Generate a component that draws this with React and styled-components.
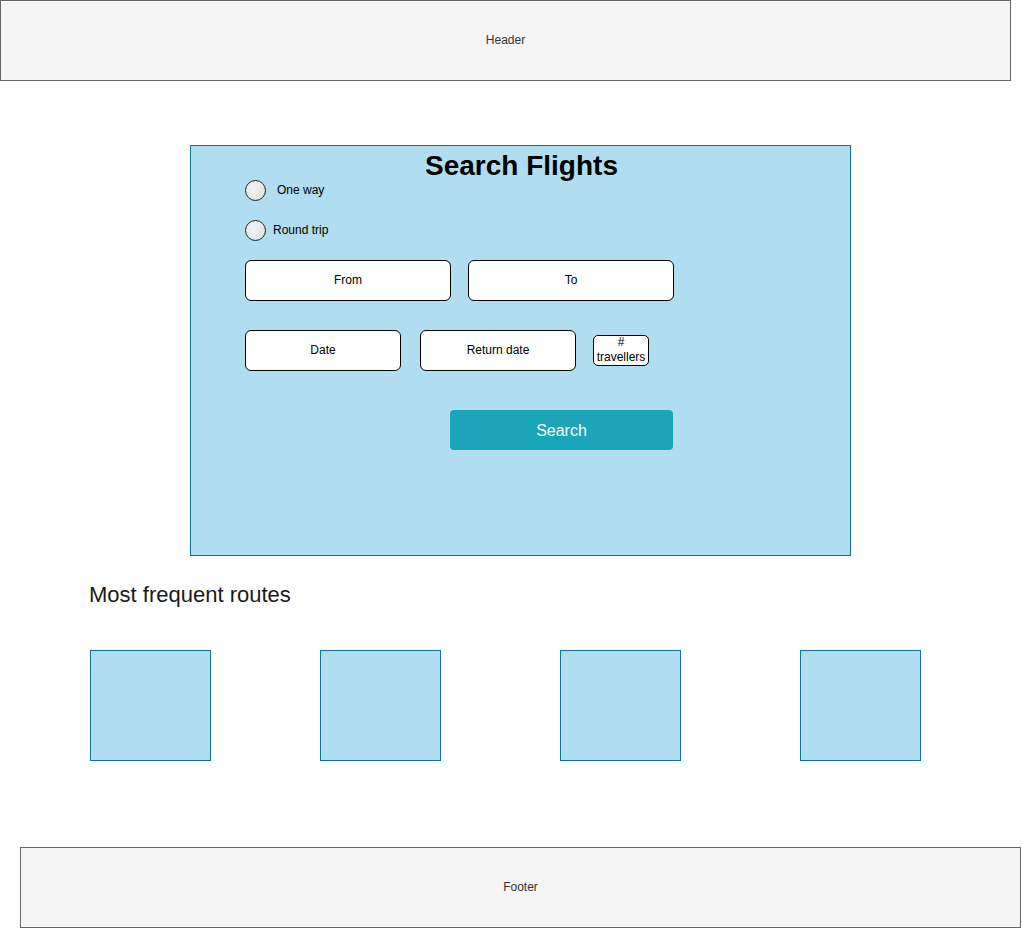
import React from "react";
import styled, { createGlobalStyle } from "styled-components";

const Global = createGlobalStyle`
  *, *::before, *::after { box-sizing: border-box; }
  html, body { margin: 0; padding: 0; background: #ffffff; }
  body { font-family: "Liberation Sans", Arial, sans-serif; color: #000; }
`;

const Page = styled.div`
  width: 1022px;
  min-height: 928px;
  display: flex;
  flex-direction: column;
`;

const Bar = styled.div`
  width: ${(p) => p.$width}px;
  height: 81px;
  margin-left: ${(p) => p.$left || 0}px;
  margin-top: ${(p) => p.$top || 0}px;
  background: #f5f5f5;
  border: 1px solid #666666;
  display: flex;
  align-items: center;
  justify-content: center;
  padding-bottom: 2px;
  font-size: 12px;
  color: #333333;
`;

const Panel = styled.section`
  margin: 64px 0 0 190px;
  width: 661px;
  height: 411px;
  background: #b1ddf0;
  border: 1px solid #10739e;
  padding: 6px 0 0 54px;
  display: flex;
  flex-direction: column;
  align-items: flex-start;
`;

const Title = styled.h1`
  align-self: stretch;
  margin: 0 0 0 -52px;
  font-size: 28px;
  line-height: 28px;
  font-weight: bold;
  text-align: center;
  color: #000;
`;

const RadioRow = styled.label`
  display: flex;
  align-items: center;
  gap: ${(p) => p.$gap}px;
  margin-top: ${(p) => p.$top}px;
  height: 21px;
  font-size: 12px;
  color: #000;
`;

const RadioLabel = styled.span`
  position: relative;
  top: -1px;
`;

const RadioCircle = styled.span`
  width: 21px;
  height: 21px;
  border-radius: 50%;
  border: 1px solid #222;
  background: radial-gradient(circle at 40% 35%, #f4f4f4 0%, #e2e2e2 80%);
`;

const FieldRow = styled.div`
  display: flex;
  align-items: center;
  gap: ${(p) => p.$gap}px;
  margin-top: ${(p) => p.$top}px;
`;

const Field = styled.div`
  width: ${(p) => p.$width}px;
  height: ${(p) => p.$height || 41}px;
  background: #ffffff;
  border: 1px solid #000;
  border-radius: ${(p) => p.$radius || 6}px;
  display: flex;
  flex-direction: column;
  align-items: center;
  justify-content: center;
  padding-bottom: 1px;
  font-size: 12px;
  line-height: ${(p) => p.$lh || 14}px;
  text-align: center;
  color: #000;
`;

const SearchButton = styled.button`
  margin: 39px 0 0 205px;
  width: 223px;
  height: 40px;
  border: none;
  border-radius: 4px;
  background: #1ba5b8;
  color: #ffffff;
  font-family: "Liberation Sans", Arial, sans-serif;
  font-size: 16px;
  padding: 0;
  padding-top: 1px;
`;

const SectionTitle = styled.h2`
  margin: 26px 0 0 89px;
  font-size: 22px;
  line-height: 26px;
  font-weight: normal;
  color: #1a1a1a;
`;

const Routes = styled.div`
  margin: 42px 0 0 90px;
  display: grid;
  grid-template-columns: 230px 240px 240px 121px;
`;

const RouteCard = styled.div`
  width: 121px;
  height: 111px;
  background: #b1ddf0;
  border: 1px solid #10739e;
`;

export default function App() {
  return (
    <Page>
      <Global />
      <Bar $width={1011}>Header</Bar>
      <Panel>
        <Title>Search Flights</Title>
        <RadioRow $top={0} $gap={11}>
          <RadioCircle />
          <RadioLabel>One way</RadioLabel>
        </RadioRow>
        <RadioRow $top={19} $gap={7}>
          <RadioCircle />
          <RadioLabel>Round trip</RadioLabel>
        </RadioRow>
        <FieldRow $top={19} $gap={17}>
          <Field $width={206}>From</Field>
          <Field $width={206}>To</Field>
        </FieldRow>
        <FieldRow $top={29} $gap={19}>
          <Field $width={156}>Date</Field>
          <Field $width={156}>Return date</Field>
          <Field $width={56} $height={31} $radius={5} $lh={15} style={{ marginLeft: -2 }}>
            <span>#</span>
            <span>travellers</span>
          </Field>
        </FieldRow>
        <SearchButton>Search</SearchButton>
      </Panel>
      <SectionTitle>Most frequent routes</SectionTitle>
      <Routes>
        <RouteCard />
        <RouteCard />
        <RouteCard />
        <RouteCard />
      </Routes>
      <Bar $width={1001} $left={20} $top={86}>Footer</Bar>
    </Page>
  );
}
